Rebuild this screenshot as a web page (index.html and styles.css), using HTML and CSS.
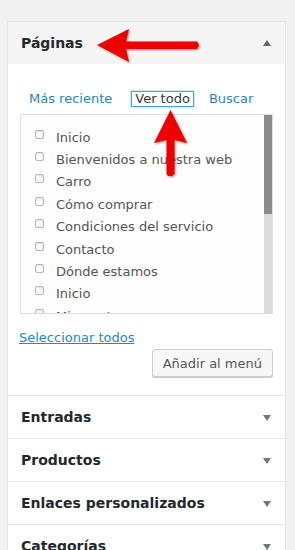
FILE: index.html
```html
<!DOCTYPE html>
<html lang="es">
<head>
    <meta charset="UTF-8">
    <meta name="viewport" content="width=device-width, initial-scale=1.0">
    <title>Menús - Páginas</title>
    <link rel="stylesheet" href="styles.css">
</head>
<body>
    <div class="menu-panels">
        <div class="panel open">
            <div class="panel-title">
                <h3>Páginas</h3>
                <span class="arrow up"></span>
            </div>
            <div class="panel-body">
                <ul class="tabs">
                    <li><a href="#">Más reciente</a></li>
                    <li class="active"><a href="#">Ver todo</a></li>
                    <li><a href="#">Buscar</a></li>
                </ul>

                <div class="list-box">
                    <ul class="checklist">
                        <li><span class="check"></span>Inicio</li>
                        <li><span class="check"></span>Bienvenidos a nuestra web</li>
                        <li><span class="check"></span>Carro</li>
                        <li><span class="check"></span>Cómo comprar</li>
                        <li><span class="check"></span>Condiciones del servicio</li>
                        <li><span class="check"></span>Contacto</li>
                        <li><span class="check"></span>Dónde estamos</li>
                        <li><span class="check"></span>Inicio</li>
                        <li><span class="check"></span>Mi cuenta</li>
                    </ul>
                    <div class="scrollbar"><div class="thumb"></div></div>
                </div>

                <a class="select-all" href="#">Seleccionar todos</a>
                <div class="actions">
                    <button type="button">Añadir al menú</button>
                </div>
            </div>
        </div>

        <div class="panel">
            <div class="panel-title"><h3>Entradas</h3><span class="arrow"></span></div>
        </div>
        <div class="panel">
            <div class="panel-title"><h3>Productos</h3><span class="arrow"></span></div>
        </div>
        <div class="panel">
            <div class="panel-title"><h3>Enlaces personalizados</h3><span class="arrow"></span></div>
        </div>
        <div class="panel">
            <div class="panel-title"><h3>Categorías</h3><span class="arrow"></span></div>
        </div>
    </div>

    <!-- red annotation arrows drawn over the screenshot -->
    <svg class="annotations" width="295" height="550" viewBox="0 0 295 550">
        <polygon points="97,45 129,29 126,41.5 197,41.5 199,45 197,49 126,49 129,62" />
        <polygon points="170.5,110 187,143 174.5,140 174.5,174 172,176 168,176 166.5,174 166.5,140 154,143" />
    </svg>
</body>
</html>
```

FILE: styles.css
```css
body {
    margin: 0;
    background-color: #f1f1f1;
    font-family: "DejaVu Sans", sans-serif;
    font-size: 13px;
    color: #555;
    height: 550px;
    overflow: hidden;
    position: relative;
}

.menu-panels {
    width: 279px;
    margin: 21px 0 0 7px;
    border: 1px solid #e5e5e5;
    border-bottom: none;
    box-sizing: border-box;
}

.panel {
    background-color: #fff;
    border-bottom: 1px solid #e5e5e5;
}

.panel-title {
    display: flex;
    align-items: center;
    justify-content: space-between;
    height: 42px;
    padding: 0 14px 0 13px;
}

.panel.open .panel-title {
    background-color: #f5f5f5;
}

.panel-title h3 {
    margin: 0;
    font-size: 14px;
    line-height: 21px;
    color: #23282d;
}

.arrow {
    width: 0;
    height: 0;
    border-left: 4px solid transparent;
    border-right: 4px solid transparent;
    border-top: 6px solid #72777c;
    margin-top: 2px;
}

.arrow.up {
    border-top: none;
    border-bottom: 6px solid #646970;
    margin-top: 0;
}

.panel-body {
    padding: 28px 12px 18px 12px;
}

.tabs {
    display: flex;
    gap: 17px;
    margin: 0;
    padding: 0 0 0 6px;
    list-style: none;
    height: 14px;
}

.tabs li:last-child {
    margin-left: -4px;
}

.tabs a {
    display: block;
    padding: 0 3px;
    line-height: 14px;
    color: #2a86c0;
    text-decoration: none;
}

.tabs .active a {
    color: #32373c;
    background-color: #fff;
    box-shadow: 0 0 0 1px #5b9dd9, 0 0 2px 1px rgba(30, 140, 190, .6);
}

.list-box {
    display: flex;
    height: 200px;
    margin-top: 8px;
    box-sizing: border-box;
    border: 1px solid #ddd;
    background-color: #fdfdfd;
}

.checklist {
    flex: 1;
    margin: 0;
    padding: 11px 0 0 14px;
    list-style: none;
    overflow: hidden;
}

.checklist li {
    display: flex;
    align-items: center;
    height: 22.4px;
    flex-shrink: 0;
    white-space: nowrap;
    color: #555;
}

.check {
    width: 9px;
    height: 9px;
    box-sizing: border-box;
    border: 1px solid #b4b9be;
    border-radius: 2px;
    background-color: #fbfbfb;
    box-shadow: inset 0 1px 2px rgba(0, 0, 0, .1);
    margin: 0 12px 6px 0;
    flex-shrink: 0;
}

.scrollbar {
    width: 8px;
    background-color: #dcdcdc;
}

.scrollbar .thumb {
    height: 99px;
    background-color: #8c8c8c;
}

.select-all {
    display: inline-block;
    margin: 16px 0 0 -1px;
    line-height: 15px;
    color: #2a86c0;
}

.actions {
    display: flex;
    justify-content: flex-end;
    margin-top: 4px;
}

.actions button {
    height: 28px;
    padding: 0 10px;
    font-family: "DejaVu Sans", sans-serif;
    font-size: 13px;
    color: #555;
    background-color: #f7f7f7;
    border: 1px solid #ccc;
    border-radius: 3px;
    box-shadow: 0 1px 0 #ccc;
    cursor: pointer;
}

.annotations {
    position: absolute;
    top: 0;
    left: 0;
    pointer-events: none;
    filter: drop-shadow(1px 1px 1px rgba(60, 0, 0, .45));
}

.annotations polygon {
    fill: #ee0000;
}
```
